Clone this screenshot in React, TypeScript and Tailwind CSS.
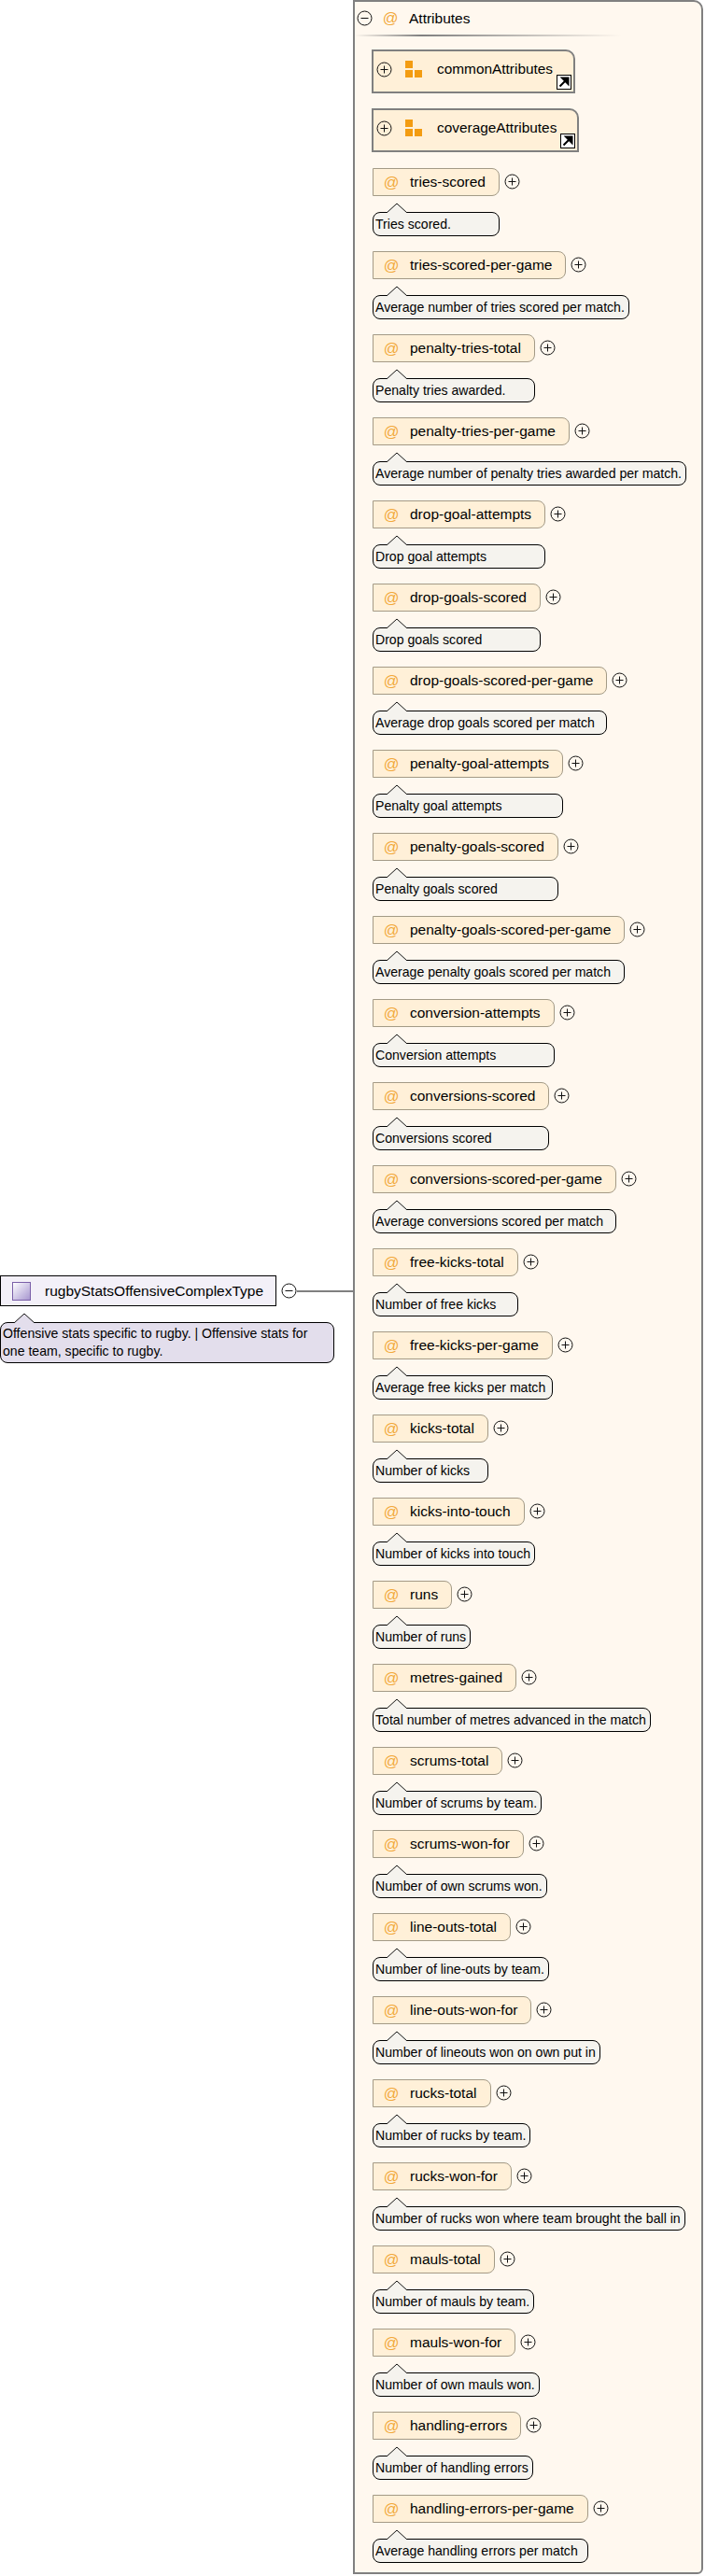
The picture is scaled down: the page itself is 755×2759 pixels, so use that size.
const attributes = [
  ["tries-scored", "Tries scored."],
  ["tries-scored-per-game", "Average number of tries scored per match."],
  ["penalty-tries-total", "Penalty tries awarded."],
  ["penalty-tries-per-game", "Average number of penalty tries awarded per match."],
  ["drop-goal-attempts", "Drop goal attempts"],
  ["drop-goals-scored", "Drop goals scored"],
  ["drop-goals-scored-per-game", "Average drop goals scored per match"],
  ["penalty-goal-attempts", "Penalty goal attempts"],
  ["penalty-goals-scored", "Penalty goals scored"],
  ["penalty-goals-scored-per-game", "Average penalty goals scored per match"],
  ["conversion-attempts", "Conversion attempts"],
  ["conversions-scored", "Conversions scored"],
  ["conversions-scored-per-game", "Average conversions scored per match"],
  ["free-kicks-total", "Number of free kicks"],
  ["free-kicks-per-game", "Average free kicks per match"],
  ["kicks-total", "Number of kicks"],
  ["kicks-into-touch", "Number of kicks into touch"],
  ["runs", "Number of runs"],
  ["metres-gained", "Total number of metres advanced in the match"],
  ["scrums-total", "Number of scrums by team."],
  ["scrums-won-for", "Number of own scrums won."],
  ["line-outs-total", "Number of line-outs by team."],
  ["line-outs-won-for", "Number of lineouts won on own put in"],
  ["rucks-total", "Number of rucks by team."],
  ["rucks-won-for", "Number of rucks won where team brought the ball in"],
  ["mauls-total", "Number of mauls by team."],
  ["mauls-won-for", "Number of own mauls won."],
  ["handling-errors", "Number of handling errors"],
  ["handling-errors-per-game", "Average handling errors per match"],
];

const Toggle = ({ open = false }: { open?: boolean }) => (
  <svg width="17" height="17" viewBox="0 0 17 17" className="shrink-0">
    <circle cx="8.5" cy="8.5" r="7.5" fill="none" stroke="#111" strokeWidth="1" />
    <path d="M4.5 8.5h8" stroke="#111" strokeWidth="1" />
    {!open && <path d="M8.5 4.5v8" stroke="#111" strokeWidth="1" />}
  </svg>
);

const Note = ({ text }: { text: string }) => (
  <div className="relative mt-[17px] w-fit min-w-full whitespace-nowrap rounded-[8px] border border-black bg-[#f5f3ee] pl-[2px] pr-[4px] text-[14.1px] leading-[24px] text-black">
    <svg width="24" height="11" viewBox="0 0 24 11" className="absolute -top-[11px] left-[13px]">
      <path d="M1 11 12 1l11 10" fill="#f5f3ee" stroke="#111" strokeWidth="1" />
    </svg>
    {text}
  </div>
);

const GroupBox = ({ name }: { name: string }) => (
  <div className="relative flex h-[47px] w-fit items-center rounded-tr-[10px] border-2 border-[#808080] bg-[#fff0d8] pb-[5px] pl-[3px] pr-[22px]">
    <Toggle />
    <svg width="19" height="19" viewBox="0 0 19 19" className="ml-[14px] shrink-0">
      <path d="M0 0h8v8H0zM0 10h8v8H0zM10 10h8v8h-8z" fill="#f39c12" />
    </svg>
    <span className="ml-[15px] text-[15.4px] text-black">{name}</span>
    <div className="absolute bottom-[2px] right-[2px] flex h-[16px] w-[16px] items-center justify-center border border-black bg-white">
      <svg width="12" height="12" viewBox="0 0 12 12">
        <path d="M1.5 10.5 7 5M4 1.5h6.5V8z" fill="#000" stroke="#000" strokeWidth="2" />
      </svg>
    </div>
  </div>
);

const AttributeRow = ({ name, note }: { name: string; note: string }) => (
  <div className="flex h-[89px] w-fit flex-col items-start">
    <div className="flex items-center">
      <div className="flex h-[30px] shrink-0 items-center rounded-r-[8px] border border-[#a39a86] bg-[#fff0d8] pl-[7px] pr-[14px]">
        <span className="w-[24px] text-center text-[16.5px] leading-none text-[#f2a93b]">@</span>
        <span className="ml-[8px] whitespace-nowrap text-[15.5px] text-black">{name}</span>
      </div>
      {/* zero width so the toggle does not count towards the note's min width */}
      <div className="-mt-[2px] w-0 shrink-0">
        <div className="ml-[5px] w-[17px]">
          <Toggle />
        </div>
      </div>
    </div>
    <Note text={note} />
  </div>
);

export default function App() {
  return (
    <div className="flex w-[755px] items-start bg-white font-['Liberation_Sans',Arial,sans-serif]">
      <div className="mt-[1366px] w-[378px] shrink-0">
        <div className="flex items-center">
          <div className="flex h-[33px] w-[296px] items-center border border-black bg-[#f3f0f8] pl-[12px]">
            <div className="h-[20px] w-[20px] border border-[#7a5fa8] bg-gradient-to-br from-white to-[#a897cf]" />
            <span className="ml-[15px] whitespace-nowrap text-[15.5px] text-black">rugbyStatsOffensiveComplexType</span>
          </div>
          <div className="ml-[5px]">
            <Toggle open />
          </div>
          <div className="h-[2px] flex-1 bg-[#808080]" />
        </div>
        <div className="relative mt-[17px] w-[358px] rounded-[8px] border border-black bg-[#e3deec] py-[2px] pl-[2px] pr-[20px] text-[14.1px] leading-[19px] text-black">
          <svg width="24" height="11" viewBox="0 0 24 11" className="absolute -top-[11px] left-[13px]">
            <path d="M1 11 12 1l11 10" fill="#e3deec" stroke="#111" strokeWidth="1" />
          </svg>
          Offensive stats specific to rugby. | Offensive stats for one team, specific to rugby.
        </div>
      </div>
      <div className="h-[2757px] w-[375px] shrink-0 rounded-br-[6px] rounded-tr-[10px] border-2 border-[#808080] bg-[#fff8ef]">
        <div className="flex h-[35px] items-center pl-[2px]">
          <Toggle open />
          <span className="ml-[7px] w-[24px] text-center text-[16.5px] leading-none text-[#f2a93b]">@</span>
          <span className="ml-[8px] text-[15.5px] text-black">Attributes</span>
        </div>
        <div className="h-[2px] w-[285px] bg-gradient-to-r from-transparent via-[#808080] via-25% to-transparent" />
        <div className="ml-[18px] mt-[14px] flex flex-col gap-[16px]">
          <GroupBox name="commonAttributes" />
          <GroupBox name="coverageAttributes" />
        </div>
        <div className="ml-[19px] mt-[17px] flex flex-col">
          {attributes.map(([name, note]) => (
            <AttributeRow key={name} name={name} note={note} />
          ))}
        </div>
      </div>
    </div>
  );
}
